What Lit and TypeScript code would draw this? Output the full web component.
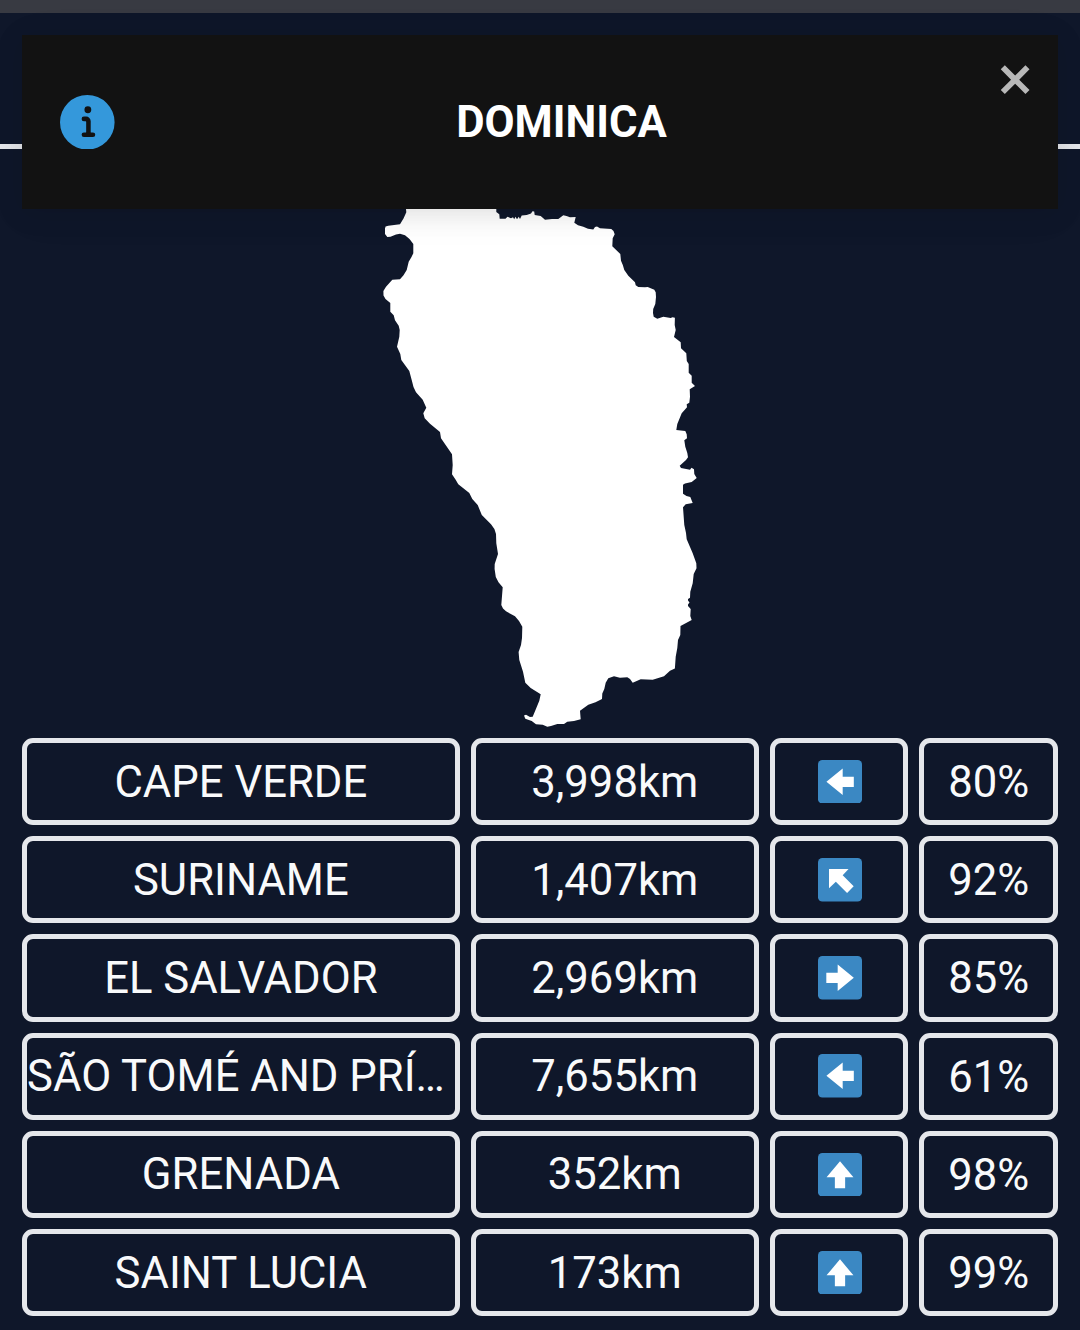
import { LitElement, html, svg, css } from "lit";
import { customElement, property } from "lit/decorators.js";

type Direction = "left" | "right" | "up" | "up-left";

interface Guess {
  country: string;
  distance: string;
  direction: Direction;
  proximity: string;
}

const GUESSES: Guess[] = [
  { country: "CAPE VERDE", distance: "3,998km", direction: "left", proximity: "80%" },
  { country: "SURINAME", distance: "1,407km", direction: "up-left", proximity: "92%" },
  { country: "EL SALVADOR", distance: "2,969km", direction: "right", proximity: "85%" },
  { country: "SÃO TOMÉ AND PRÍNCIPE", distance: "7,655km", direction: "left", proximity: "61%" },
  { country: "GRENADA", distance: "352km", direction: "up", proximity: "98%" },
  { country: "SAINT LUCIA", distance: "173km", direction: "up", proximity: "99%" },
];

const ARROWS: Record<Direction, string> = {
  left: "M20.2 7L6.9 18l13.3 11v-6.8h9.1v-8.4h-9.1z",
  right: "M16.1 7l13.2 11-13.2 11v-6.8H6.8v-8.4h9.3z",
  up: "M7 20.1L18 6.9l11 13.2h-6.8v9.1h-8.4v-9.1z",
  "up-left": "M9 9h16l-4.8 5.2 9 9.2-5.4 5.5-9.2-9.3L9 25z",
};

const COASTLINE = `M406 200L406 209L406.3 212.3L403.5 218.5L400 224.3L388.3 225.7L385.6 226.6L385 228.5L385 234L387.3 237L390.5 236.7
L396 234.6L400 233.7L405 235.3L409.5 239L413.3 244L413.3 253.3L411.5 257L408.7 261.7L406.7 270L403.5 275.2L400 279.3L392.3 279.7
L386 286.7L383.4 291L383.5 295.5L385.5 299L390.3 303L390.3 311.7L393.7 315.3L395 320.3L398.7 325.7L399.7 330L399.3 336.7
L397 346.7L400.3 354L401.3 360L409.3 371L411.7 380L413.5 387L416 392.3L422.7 399.7L426.3 407.7L423.3 413.3L424.7 418.3
L430 423.7L440 432L441 438.3L452 454.3L452.7 465L452 474.3L455.5 479.5L458.3 484.3L469.3 493L472.3 499L477.7 505L481.8 515
L491 524.3L494.4 529L496 534L496.3 543.3L498 554L494.7 564L494.6 569L495.8 577L498.5 582.3L502.7 587.3L501.3 605L503 608.4L506 611.3
L515 616.3L519 621L522.3 626.7L522 638L521 645L518.6 652L519.3 660L523 671.7L525.3 682.7L530.7 688L540.7 694.3L539.3 700.7
L535.5 710L532.7 716.7L530 717L526 714.8L524 715.5L525.3 718.7L531.7 721L536 724.3L542.7 724.7L547.3 726.7L551 726L557.3 724
L564 724L567.3 721.7L574 721L580.7 719.3L580 710.7L588.3 704.7L595.5 702.3L602 699L602.3 693.5L604.3 689L605.7 682.7L608.3 678.3
L614 676.2L620 677.7L627.3 677.2L630 679L632.7 682.7L640.7 679.2L652.7 679.7L664 676.3L670 670.7L674.9 668.4L675.7 656.7
L677.3 648L678 640L680.3 635L680.5 626L691.7 620L690.3 616L690.7 609L688 606L688 604.4L689.5 602.5L688 600.5L688 599L690 597.7
L690.3 591.7L692.7 583.3L693.7 574L696.5 568.3L696.3 563.3L692.7 553.3L686.7 539.3L686 533L684.3 525L683 507.3L685.7 504.3
L692.7 503L690.3 497L686.5 496L683 493.7L683 484.7L685 483.5L691.7 482L696.7 478L694.3 474L694 469.3L691.5 467.7L690 469.7
L681 468L679.7 465.7L686 460L688 457.3L687.3 453L685.3 446.7L684.3 440.3L687 438.3L686.7 434.3L685.3 431L676.3 430L677.3 424
L681.7 413.3L687 407.3L686.7 404.3L689.3 402.7L690 396.7L689.7 389.3L695 386L691.7 382.7L691.7 375.7L688.7 372.7L688.7 364
L686.8 361L686.3 353.3L681 348.3L680.7 342.3L674 337L675.7 330L674.7 325L674.9 317.7L672.5 317.2L670.7 318L663.3 316.7L657.3 318.7
L653.7 316.7L653 313L653.2 309L655.3 304L656 297L655.7 292.3L654.3 289.8L647.7 287L645 287.2L638.3 287L635.7 285.3L635 282.3
L628.3 275.7L624.3 270L622.8 265L621 260.7L620.3 254L612.3 246.3L612.7 238.3L614.7 234.3L613.5 231L611.3 229L600 228.2L597 226.5
L595 227L593.3 229.5L588 228.7L583.3 226.7L578 225.3L574.3 222.7L575.7 217L570 217.3L566.5 216L563.3 215.3L558.3 219L552 219
L545 219.7L540.7 216L534.7 215L534.2 211.5L532.5 211.3L531 213.4L526.7 215L521.7 215.5L520 219L518.7 216.8L517 219.2L515.5 216.8
L514.2 219.2L513 217.2L511 218.2L507.5 216.8L505.5 218.7L499.7 218.7L499.3 214.3L496.3 212L496.3 200Z`;

@customElement("arrow-tile")
export class ArrowTile extends LitElement {
  @property() direction: Direction = "up";

  static styles = css`
    :host { display: block; width: 44px; height: 43.6px; margin-left: 1px; }
    .tile { display: block; width: 100%; height: 100%; }
  `;

  render() {
    return html`<svg class="tile" viewBox="0 0 36 36" preserveAspectRatio="none" aria-hidden="true">
      <rect width="36" height="36" rx="3.6" fill="#3b88c3"></rect>
      ${svg`<path d=${ARROWS[this.direction]} fill="#fff"></path>`}
    </svg>`;
  }
}

@customElement("guess-row")
export class GuessRow extends LitElement {
  @property({ attribute: false }) guess!: Guess;

  static styles = css`
    :host {
      display: grid;
      grid-template-columns: repeat(7, minmax(0, 1fr));
      column-gap: 11px;
      height: 87.2px;
    }
    .cell {
      box-sizing: border-box;
      min-width: 0;
      display: flex;
      align-items: center;
      justify-content: center;
      border: 5px solid #e5e7eb;
      border-radius: 11px;
    }
    .country { grid-column: span 3; }
    .distance { grid-column: span 2; }
    .label {
      min-width: 0;
      padding-top: 2px;
      overflow: hidden;
      white-space: nowrap;
      text-overflow: ellipsis;
      line-height: 66px;
    }
    .proximity .label { padding-top: 2.9px; }
  `;

  render() {
    const g = this.guess;
    return html`
      <div class="cell country"><span class="label">${g.country}</span></div>
      <div class="cell distance"><span class="label">${g.distance}</span></div>
      <div class="cell"><arrow-tile .direction=${g.direction}></arrow-tile></div>
      <div class="cell proximity"><span class="label">${g.proximity}</span></div>
    `;
  }
}

@customElement("toast-message")
export class ToastMessage extends LitElement {
  static styles = css`
    :host {
      box-sizing: border-box;
      display: flex;
      align-items: flex-start;
      padding: 22px;
      background: #121212;
      box-shadow: 0 3px 27px rgba(0, 0, 0, 0.1), 0 5px 41px rgba(0, 0, 0, 0.05);
    }
    .body {
      flex: 1;
      align-self: stretch;
      display: flex;
      align-items: center;
      gap: 27px;
      padding: 0 16px;
    }
    .info { width: 54.6px; height: 54.6px; flex: none; }
    .text {
      flex: 1;
      padding-top: 2px;
      text-align: center;
      font-weight: 700;
      line-height: 66px;
      color: #fff;
    }
    .close { width: 38.5px; height: 44px; flex: none; opacity: 0.7; }
  `;

  render() {
    return html`
      <div class="body">
        <svg class="info" viewBox="0 0 24 24" fill="#3498db">
          <path d="M12 0a12 12 0 1012 12A12.013 12.013 0 0012 0zm.25 5a1.5 1.5 0 11-1.5 1.5 1.5 1.5 0 011.5-1.5zm2.25 13.5h-4a1 1 0 010-2h.75a.25.25 0 00.25-.25v-4.5a.25.25 0 00-.25-.25h-.75a1 1 0 010-2h1a2 2 0 012 2v4.75a.25.25 0 00.25.25h.75a1 1 0 110 2z"></path>
        </svg>
        <div class="text"><slot></slot></div>
      </div>
      <svg class="close" viewBox="0 0 14 16" fill="#fff">
        <path d="M7.71 8.23l3.75 3.75-1.48 1.48-3.75-3.75-3.75 3.75L1 11.98l3.75-3.75L1 4.48 2.48 3l3.75 3.75L9.98 3l1.48 1.48-3.75 3.75z"></path>
      </svg>
    `;
  }
}

@customElement("app-root")
export class AppRoot extends LitElement {
  static styles = css`
    :host {
      position: relative;
      display: flex;
      flex-direction: column;
      height: 1330px;
      overflow: hidden;
      background: #0f172a;
      color: #f9fafb;
      font-family: Roboto, "Liberation Sans", sans-serif;
      font-size: 43.64px;
    }
    .browser-edge { height: 13px; flex: none; background: #383a42; }
    .header { height: 131px; flex: none; border-bottom: 5px solid #e5e7eb; }
    .map { display: block; width: 1080px; height: 589px; flex: none; }
    .guesses {
      display: flex;
      flex-direction: column;
      gap: 11px;
      padding: 0 22px;
    }
    .toast {
      position: absolute;
      top: 35px;
      left: 22px;
      width: 1036px;
      height: 174px;
    }
  `;

  render() {
    return html`
      <div class="browser-edge"></div>
      <header class="header"></header>
      <svg class="map" viewBox="0 149 1080 589">
        <path d=${COASTLINE} fill="#fff" stroke-linejoin="round"></path>
      </svg>
      <main class="guesses">
        ${GUESSES.map((g) => html`<guess-row .guess=${g}></guess-row>`)}
      </main>
      <toast-message class="toast">DOMINICA</toast-message>
    `;
  }
}
